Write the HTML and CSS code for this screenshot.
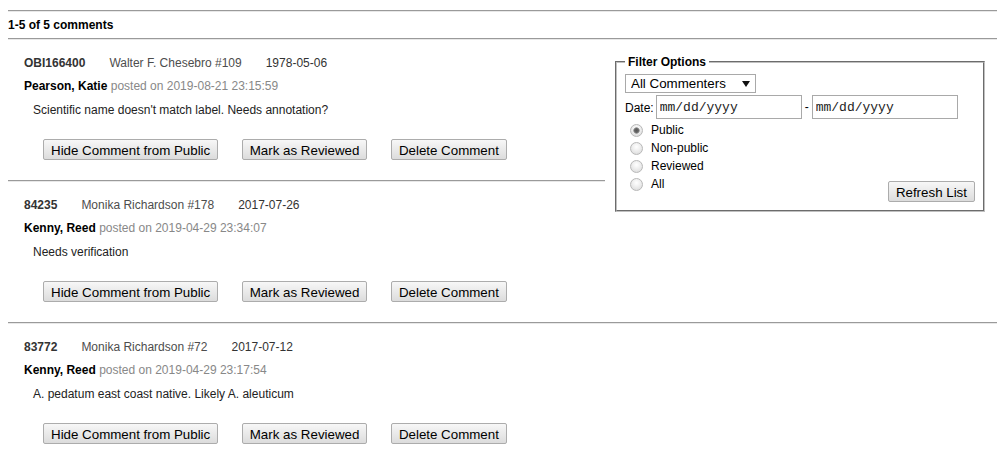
FILE: index.html
```html
<!DOCTYPE html>
<html lang="en">
<head>
<meta charset="utf-8">
<title>Comments</title>
<link rel="stylesheet" href="styles.css">
</head>
<body>
  <hr class="rule rule-top">
  <div class="count">1-5 of 5 comments</div>
  <hr class="rule">
  <div class="comments">
    <fieldset class="filter">
      <legend>Filter Options</legend>
      <div class="select-wrap">
        <select class="commenter"><option>All Commenters</option></select>
      </div>
      <div class="date-row">
        <label class="date-label">Date:</label>
        <input class="date" type="text" value="mm/dd/yyyy">
        <span class="dash">-</span>
        <input class="date" type="text" value="mm/dd/yyyy">
      </div>
      <div class="filter-bottom">
        <div class="radios">
          <label class="radio"><input type="radio" name="status" checked><span>Public</span></label>
          <label class="radio"><input type="radio" name="status"><span>Non-public</span></label>
          <label class="radio"><input type="radio" name="status"><span>Reviewed</span></label>
          <label class="radio"><input type="radio" name="status"><span>All</span></label>
        </div>
        <button class="btn" type="button">Refresh List</button>
      </div>
    </fieldset>

    <div class="comment">
      <div class="meta"><span class="id">OBI166400</span><span class="collector">Walter F. Chesebro #109</span><span class="cdate">1978-05-06</span></div>
      <div class="author"><b>Pearson, Katie</b> <span class="posted">posted on 2019-08-21 23:15:59</span></div>
      <div class="text">Scientific name doesn't match label. Needs annotation?</div>
      <div class="actions">
        <button class="btn" type="button">Hide Comment from Public</button>
        <button class="btn" type="button">Mark as Reviewed</button>
        <button class="btn" type="button">Delete Comment</button>
      </div>
    </div>
    <hr class="rule">

    <div class="comment">
      <div class="meta"><span class="id">84235</span><span class="collector">Monika Richardson #178</span><span class="cdate">2017-07-26</span></div>
      <div class="author"><b>Kenny, Reed</b> <span class="posted">posted on 2019-04-29 23:34:07</span></div>
      <div class="text">Needs verification</div>
      <div class="actions">
        <button class="btn" type="button">Hide Comment from Public</button>
        <button class="btn" type="button">Mark as Reviewed</button>
        <button class="btn" type="button">Delete Comment</button>
      </div>
    </div>
    <hr class="rule">

    <div class="comment">
      <div class="meta"><span class="id">83772</span><span class="collector">Monika Richardson #72</span><span class="cdate">2017-07-12</span></div>
      <div class="author"><b>Kenny, Reed</b> <span class="posted">posted on 2019-04-29 23:17:54</span></div>
      <div class="text">A. pedatum east coast native. Likely A. aleuticum</div>
      <div class="actions">
        <button class="btn" type="button">Hide Comment from Public</button>
        <button class="btn" type="button">Mark as Reviewed</button>
        <button class="btn" type="button">Delete Comment</button>
      </div>
    </div>
    <hr class="rule">
  </div>
</body>
</html>
```

FILE: styles.css
```css
* { box-sizing: border-box; }

body {
  margin: 8px;
  font-family: "Liberation Sans", Arial, sans-serif;
  font-size: 12px;
  line-height: 14px;
  color: #000;
  background: #fff;
}

.rule {
  display: block;
  height: 0;
  margin: 0;
  border: 0;
  border-top: 1px solid #9a9a9a;
  border-bottom: 1px solid #e8e8e8;
  overflow: hidden;
}
.rule-top { margin-top: 2px; }

.count {
  font-weight: bold;
  padding: 6px 0 6px;
}

/* filter box */
.filter {
  float: right;
  width: 370px;
  margin: 15px 12px 0 10px;
  padding: 5px 8px 8px 8px;
  border: 2px groove #c0c0c0;
  min-width: 0;
}
.filter legend {
  font-weight: bold;
  padding: 0 3px;
  line-height: 14px;
}

.select-wrap {
  position: relative;
  width: 131px;
  height: 19px;
}
.select-wrap::after {
  content: "";
  position: absolute;
  right: 6px;
  top: 7px;
  border-left: 4px solid transparent;
  border-right: 4px solid transparent;
  border-top: 6px solid #111;
  pointer-events: none;
}
.commenter {
  appearance: none;
  -webkit-appearance: none;
  display: block;
  width: 131px;
  height: 19px;
  margin: 0;
  padding: 1px 0 0 5px;
  border: 1px solid #a9a9a9;
  border-radius: 0;
  background: #fff;
  color: #000;
  font-family: "Liberation Sans", Arial, sans-serif;
  font-size: 13.333px;
  line-height: 16px;
}

.date-row {
  display: flex;
  align-items: center;
  height: 24px;
  margin-top: 2px;
}
.date-label { margin-right: 2px; padding-top: 1px; }
.date {
  width: 146px;
  height: 24px;
  margin: 0;
  padding: 1px 3px 0;
  border: 1px solid #a9a9a9;
  border-radius: 0;
  font-family: "Liberation Mono", "Courier New", monospace;
  font-size: 13px;
  color: #222;
  background: #fff;
}
.dash { margin: 0 3px; }

.filter-bottom {
  display: flex;
  justify-content: space-between;
  align-items: flex-end;
  margin-top: 2px;
}
.radios { padding-bottom: 9px; }
.radio {
  display: flex;
  align-items: center;
  height: 18px;
}
.radio input {
  appearance: none;
  -webkit-appearance: none;
  width: 13px;
  height: 13px;
  margin: 0 8px 0 5px;
  border-radius: 50%;
  border: 1px solid #b8b8b8;
  background: radial-gradient(circle at 50% 35%, #ffffff 0, #f2f2f2 35%, #d6d6d6 100%);
}
.radio input:checked {
  background:
    radial-gradient(circle at 50% 50%, #555 0, #666 2px, rgba(120,120,120,0.6) 3px, rgba(255,255,255,0) 3.5px),
    radial-gradient(circle at 50% 35%, #ffffff 0, #f2f2f2 35%, #d6d6d6 100%);
}

/* buttons */
.btn {
  height: 21px;
  margin: 0;
  padding: 1px 7px 0;
  border: 1px solid #acacac;
  border-radius: 2px;
  background: linear-gradient(#f7f7f7, #dcdcdc);
  color: #000;
  font-family: "Liberation Sans", Arial, sans-serif;
  font-size: 13.333px;
  line-height: 17px;
  white-space: nowrap;
}

/* comments */
.comment {
  padding: 16px 0 20px 16px;
}
.meta {
  display: flex;
  gap: 24px;
  color: #333;
}
.meta .id { font-weight: bold; }
.meta .collector { color: #4d4d4d; }
.meta .cdate { color: #333; }

.author { margin-top: 9px; }
.posted { color: #888; }

.text {
  margin-top: 10px;
  padding-left: 9px;
  color: #222;
}

.actions {
  display: flex;
  gap: 23.5px;
  margin-top: 22px;
  padding-left: 19px;
}
```
